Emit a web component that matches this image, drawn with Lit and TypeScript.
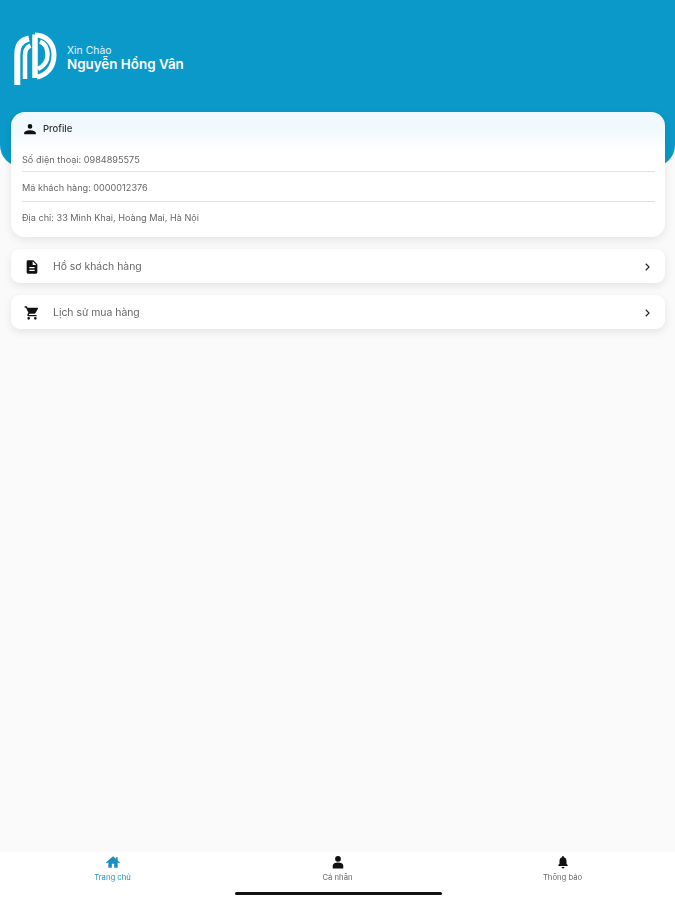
import { LitElement, html, css } from "lit";
import { customElement } from "lit/decorators.js";

const chevron = html`<svg class="chev" viewBox="0 0 24 24"><path d="M8 5.200 10 3.200l8.800 8.800-8.800 8.800-2-2 6.800-6.800z" fill="#222"/></svg>`;

@customElement("app-root")
export class AppRoot extends LitElement {
  static styles = css`
    :host { display: block; width: 675px; height: 900px; background: #fafafa; font-family: Inter, "Noto Sans", sans-serif; color: #555; overflow: hidden; }
    .page { display: flex; flex-direction: column; height: 900px; filter: blur(0.5px); }
    .hero { height: 167px; flex: none; background: #0a99c9; border-radius: 0 0 22px 22px; margin-bottom: -55px; padding: 32px 0 0 14px; box-sizing: border-box; display: flex; align-items: flex-start; gap: 10px; color: #fff; }
    .logo { width: 43px; height: 53px; flex: none; }
    .greet { padding-top: 12px; display: flex; flex-direction: column; }
    .hi { font-size: 10.4px; line-height: 13px; color: #e4f4fa; }
    .name { font-size: 13.4px; line-height: 15px; font-weight: 600; }
    .content { flex: 1; padding: 0 10px 0 11px; display: flex; flex-direction: column; position: relative; }
    .card { background: #fff; border-radius: 14px; box-shadow: 0 3px 9px rgba(0,0,0,.09); }
    .profile { height: 125px; display: flex; flex-direction: column; overflow: hidden; background: linear-gradient(#eef8fe, #f3fafe 22px, #fff 40px); }
    .phead { height: 33px; padding: 0 12px; box-sizing: border-box; display: flex; align-items: center; gap: 6px; flex: none; font-size: 9.5px; font-weight: 500; color: #333; }
    .phead svg { width: 14px; height: 14px; fill: #111; }
    .rows { padding: 0 10px 0 11px; display: flex; flex-direction: column; font-size: 9.15px; color: #666; }
    .row { height: 30px; display: flex; align-items: center; border-bottom: 1px solid #e2e2e2; box-sizing: border-box; }
    .row:first-child { height: 27px; padding-top: 2px; }
    .row:nth-child(2) { padding-top: 1px; }
    .row:last-child { border: none; padding-top: 1px; }
    .item { height: 34px; margin-top: 12px; display: flex; align-items: center; padding: 1px 13px 0 13px; box-sizing: border-box; font-size: 10.4px; color: #666; border-radius: 9px; }
    .item .ic { width: 16px; height: 16px; fill: #111; flex: none; margin-right: 13px; }
    .item span { flex: 1; }
    .chev { width: 10px; height: 10px; flex: none; }
    .nav { height: 48px; flex: none; background: #fff; display: grid; grid-template-columns: repeat(3, 1fr); position: relative; }
    .tab { display: flex; flex-direction: column; align-items: center; padding-top: 3px; font-size: 7.7px; color: #666; gap: 4px; line-height: 9px; }
    .tab svg { width: 14px; height: 14px; fill: #111; }
    .tab.on { color: #1a8fc0; }
    .tab.on svg { fill: #1a8fc0; }
    .home-bar { position: absolute; left: 235px; width: 207px; height: 3px; bottom: 5px; background: #111; border-radius: 2px; }
  `;

  render() {
    return html`<div class="page">
      <header class="hero">
        <svg class="logo" viewBox="0 0 43 53" fill="none" stroke="#fff">
          <path stroke-width="6" d="M3.300 53V22C3.300 13 8 8 15 6.500"/>
          <path stroke-width="4.500" d="M11 47V23C11 18 13 15 16.500 13.500"/>
          <path stroke-width="5.500" d="M21 46V2.500"/>
          <path stroke-width="5" d="M21 3C32 3 40 11 40 23S33 43 23 45"/>
          <path stroke-width="4.500" d="M26 9.500C31 11.500 33.500 16.500 33.500 23S31 33.500 24 37"/>
        </svg>
        <div class="greet"><div class="hi">Xin Chào</div><div class="name">Nguyễn Hồng Vân</div></div>
      </header>
      <main class="content">
        <section class="card profile">
          <div class="phead"><svg viewBox="0 0 24 24"><path d="M12 11.500a4 4 0 1 0 0-8 4 4 0 0 0 0 8zm0 2.500c-3.500 0-10 1.400-10 4.500V21h20v-2.500c0-3.100-6.500-4.500-10-4.500z"/></svg>Profile</div>
          <div class="rows">
            <div class="row">Số điện thoại: 0984895575</div>
            <div class="row">Mã khách hàng: 0000012376</div>
            <div class="row">Địa chỉ: 33 Minh Khai, Hoàng Mai, Hà Nội</div>
          </div>
        </section>
        <div class="card item">
          <svg class="ic" viewBox="0 0 24 24"><path d="M14 2H6a2 2 0 0 0-2 2v16a2 2 0 0 0 2 2h12a2 2 0 0 0 2-2V8zm2 16H8v-2h8zm0-4H8v-2h8zm-3-5V3.500L18.500 9z"/></svg>
          <span>Hồ sơ khách hàng</span>${chevron}
        </div>
        <div class="card item">
          <svg class="ic" viewBox="0 0 24 24"><path d="M7 18a2 2 0 1 0 0 4 2 2 0 0 0 0-4zM1 2v2h2l3.600 7.600-1.350 2.450A2 2 0 0 0 7 17h12v-2H7.400a.25.25 0 0 1-.25-.25l.03-.12L8.100 13h7.450c.75 0 1.410-.41 1.750-1.030L20.880 5.500A1 1 0 0 0 20 4H5.210l-.94-2zm16 16a2 2 0 1 0 0 4 2 2 0 0 0 0-4z"/></svg>
          <span>Lịch sử mua hàng</span>${chevron}
        </div>
      </main>
      <nav class="nav">
        <div class="tab on"><svg viewBox="0 0 24 24"><path d="M12 2 0 13l1.500 1.600L4 12.400V22h6v-7h4v7h6v-9.600l2.500 2.200L24 13l-4-3.700V4h-3v2.500z"/></svg>Trang chủ</div>
        <div class="tab"><svg viewBox="0 0 24 24"><circle cx="12" cy="6.500" r="5"/><path d="M3 23v-5c0-3 4-5 9-5s9 2 9 5v5z"/></svg>Cá nhân</div>
        <div class="tab"><svg viewBox="0 0 24 24"><path d="M12 23a2.500 2.500 0 0 0 2.500-2.500h-5A2.500 2.500 0 0 0 12 23zm8-6-2-2v-5c0-3-1.600-5.600-4.500-6.300V3a1.500 1.500 0 0 0-3 0v.7C7.600 4.400 6 7 6 10v5l-2 2v2h16z"/></svg>Thông báo</div>
        <div class="home-bar"></div>
      </nav>
    </div>`;
  }
}
